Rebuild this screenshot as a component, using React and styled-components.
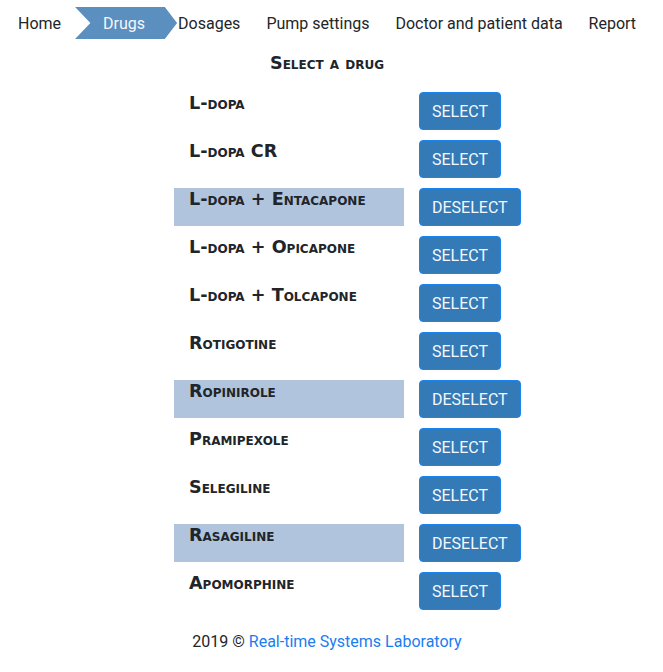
import React from "react";
import styled, { createGlobalStyle } from "styled-components";

const Global = createGlobalStyle`
  html, body { margin: 0; padding: 0; background: #fff; }
  body { font-family: Roboto, "Liberation Sans", sans-serif; color: #212529; }
`;

const Page = styled.div`
  width: 663px;
`;

const Nav = styled.nav`
  display: flex;
  align-items: center;
  height: 32px;
  padding: 7px 0 0 18px;
  font-size: 16px;
`;

const NavItem = styled.div`
  display: flex;
  align-items: center;
  height: 32px;
  margin-right: ${(p) => p.$mr}px;
  color: #212529;
  white-space: nowrap;
`;

const Chevron = styled.div`
  display: flex;
  align-items: center;
  justify-content: center;
  height: 32px;
  width: 102px;
  margin-right: 1px;
  padding-right: 4px;
  box-sizing: border-box;
  background: #5b8fc0;
  color: #f4f7fb;
  clip-path: polygon(0 0, 88% 0, 100% 50%, 88% 100%, 0 100%, 15% 50%);
`;

const smallCaps = `
  font-family: "DejaVu Sans", Verdana, sans-serif;
  font-variant: small-caps;
  font-weight: 700;
  font-size: 17.6px;
`;

const Heading = styled.h2`
  margin: 13px 0 0 0;
  padding-right: 9px;
  text-align: center;
  ${smallCaps}
  line-height: 22px;
`;

const Table = styled.div`
  display: grid;
  grid-template-columns: 230px auto;
  column-gap: 15px;
  row-gap: 10px;
  margin: 18px 0 0 174px;
  width: max-content;
`;

const NameCell = styled.div`
  height: 38px;
  box-sizing: border-box;
  padding: 0 0 0 15px;
  background: ${(p) => (p.$selected ? "#b0c4de" : "transparent")};
  ${smallCaps}
  line-height: 22px;
  color: #212529;
`;

const Button = styled.button`
  justify-self: start;
  height: 38px;
  padding: 0 12px;
  border: 1px solid #1a84f0;
  border-radius: 4px;
  background: #337ab7;
  color: #f5f8fc;
  font-family: Roboto, sans-serif;
  font-size: 16px;
  text-transform: uppercase;
  cursor: pointer;
`;

const Footer = styled.footer`
  margin-top: 22px;
  text-align: center;
  font-size: 16px;
  color: #212529;
  padding-right: 9px;
`;

const Link = styled.a`
  color: #1a7df0;
  text-decoration: none;
`;

const drugs = [
  ["L-dopa", false],
  ["L-dopa CR", false],
  ["L-dopa + Entacapone", true],
  ["L-dopa + Opicapone", false],
  ["L-dopa + Tolcapone", false],
  ["Rotigotine", false],
  ["Ropinirole", true],
  ["Pramipexole", false],
  ["Selegiline", false],
  ["Rasagiline", true],
  ["Apomorphine", false],
];

export default function App() {
  return (
    <Page>
      <Global />
      <Nav>
        <NavItem $mr={14}>Home</NavItem>
        <Chevron>Drugs</Chevron>
        <NavItem $mr={26}>Dosages</NavItem>
        <NavItem $mr={26}>Pump settings</NavItem>
        <NavItem $mr={26}>Doctor and patient data</NavItem>
        <NavItem $mr={0}>Report</NavItem>
      </Nav>
      <Heading>Select a drug</Heading>
      <Table>
        {drugs.map(([name, sel]) => (
          <React.Fragment key={name}>
            <NameCell $selected={sel}>{name}</NameCell>
            <Button>{sel ? "Deselect" : "Select"}</Button>
          </React.Fragment>
        ))}
      </Table>
      <Footer>
        2019 © <Link href="#">Real-time Systems Laboratory</Link>
      </Footer>
    </Page>
  );
}
